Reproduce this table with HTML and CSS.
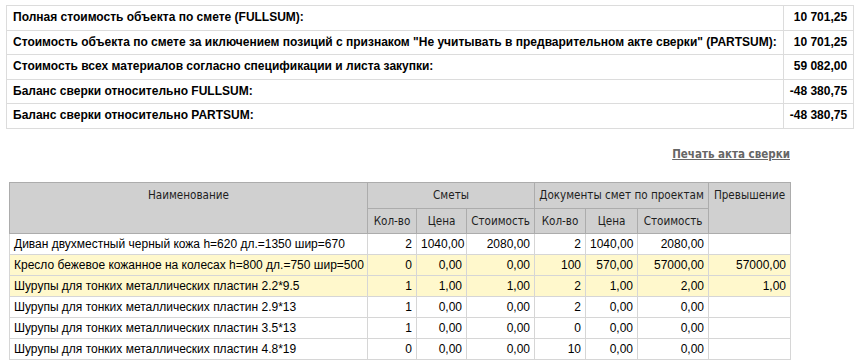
FILE: index.html
```html
<!DOCTYPE html>
<html lang="ru">
<head>
<meta charset="utf-8">
<link rel="stylesheet" href="styles.css">
</head>
<body>
<div class="page">
  <table class="summary">
    <tr><td class="lbl">Полная стоимость объекта по смете (FULLSUM):</td><td class="val">10 701,25</td></tr>
    <tr><td class="lbl">Стоимость объекта по смете за иключением позиций с признаком "Не учитывать в предварительном акте сверки" (PARTSUM):</td><td class="val">10 701,25</td></tr>
    <tr><td class="lbl">Стоимость всех материалов согласно спецификации и листа закупки:</td><td class="val">59 082,00</td></tr>
    <tr><td class="lbl">Баланс сверки относительно FULLSUM:</td><td class="val">-48 380,75</td></tr>
    <tr><td class="lbl">Баланс сверки относительно PARTSUM:</td><td class="val">-48 380,75</td></tr>
  </table>

  <div class="compare">
    <div class="actions"><a class="print" href="#">Печать акта сверки</a></div>
    <table class="grid">
      <colgroup>
        <col class="c-name"><col class="c-q1"><col class="c-p1"><col class="c-s1"><col class="c-q2"><col class="c-p2"><col class="c-s2"><col class="c-ex">
      </colgroup>
      <thead>
        <tr class="h1">
          <th rowspan="2">Наименование</th>
          <th colspan="3">Сметы</th>
          <th colspan="3">Документы смет по проектам</th>
          <th rowspan="2">Превышение</th>
        </tr>
        <tr class="h2">
          <th>Кол-во</th><th>Цена</th><th>Стоимость</th>
          <th>Кол-во</th><th>Цена</th><th>Стоимость</th>
        </tr>
      </thead>
      <tbody>
        <tr><td class="name">Диван двухместный черный кожа h=620 дл.=1350 шир=670</td><td>2</td><td>1040,00</td><td>2080,00</td><td>2</td><td>1040,00</td><td>2080,00</td><td></td></tr>
        <tr class="warn"><td class="name">Кресло бежевое кожанное на колесах h=800 дл.=750 шир=500</td><td>0</td><td>0,00</td><td>0,00</td><td>100</td><td>570,00</td><td>57000,00</td><td>57000,00</td></tr>
        <tr class="warn"><td class="name">Шурупы для тонких металлических пластин 2.2*9.5</td><td>1</td><td>1,00</td><td>1,00</td><td>2</td><td>1,00</td><td>2,00</td><td>1,00</td></tr>
        <tr><td class="name">Шурупы для тонких металлических пластин 2.9*13</td><td>1</td><td>0,00</td><td>0,00</td><td>2</td><td>0,00</td><td>0,00</td><td></td></tr>
        <tr><td class="name">Шурупы для тонких металлических пластин 3.5*13</td><td>1</td><td>0,00</td><td>0,00</td><td>0</td><td>0,00</td><td>0,00</td><td></td></tr>
        <tr><td class="name">Шурупы для тонких металлических пластин 4.8*19</td><td>0</td><td>0,00</td><td>0,00</td><td>10</td><td>0,00</td><td>0,00</td><td></td></tr>
      </tbody>
    </table>
  </div>
</div>
</body>
</html>
```

FILE: styles.css
```css
html, body {
  margin: 0;
  padding: 0;
  background: #fff;
}
.page {
  padding: 5px 4px 0 6px;
  font-family: "Liberation Sans", Arial, sans-serif;
  color: #000;
}
.summary {
  width: 847px;
  border-collapse: collapse;
  font-size: 12px;
  font-weight: bold;
}
.summary td {
  border: 1px solid #dcdcdc;
  padding: 5px 6px 5px 6px;
  line-height: 13.6px;
  white-space: nowrap;
}
.summary .val {
  text-align: right;
  width: 55px;
}
.compare {
  width: 781px;
  margin-left: 3px;
}
.actions {
  display: flex;
  justify-content: flex-end;
  padding: 18px 0 21px;
}
.print {
  font-family: "DejaVu Sans Condensed", "DejaVu Sans", Tahoma, sans-serif;
  font-stretch: condensed;
  font-size: 11.5px;
  font-weight: bold;
  color: #666;
  text-decoration: underline;
  line-height: 14px;
}
.grid {
  width: 781px;
  table-layout: fixed;
  border-collapse: collapse;
  font-size: 12px;
}
.c-name { width: 358px; }
.c-q1 { width: 49px; }
.c-p1 { width: 50px; }
.c-s1 { width: 68px; }
.c-q2 { width: 51px; }
.c-p2 { width: 52px; }
.c-s2 { width: 71px; }
.c-ex { width: 82px; }
.grid th {
  background: #d0d0d0;
  border: 1px solid #acacac;
  font-family: "DejaVu Sans Condensed", "DejaVu Sans", Tahoma, sans-serif;
  font-stretch: condensed;
  font-size: 11.6px;
  font-weight: normal;
  color: #1e1e1e;
  vertical-align: top;
  text-align: center;
  padding: 5px 2px 5px;
  line-height: 15px;
  white-space: nowrap;
}
.grid .h2 th {
  padding: 5px 2px 4px;
  line-height: 15px;
}
.grid td {
  border: 1px solid #d6d6d6;
  padding: 3px 4px 3px 4px;
  line-height: 14px;
  text-align: right;
  white-space: nowrap;
}
.grid td.name {
  text-align: left;
}
.grid tr.warn td {
  background: #fff8cc;
}
```
